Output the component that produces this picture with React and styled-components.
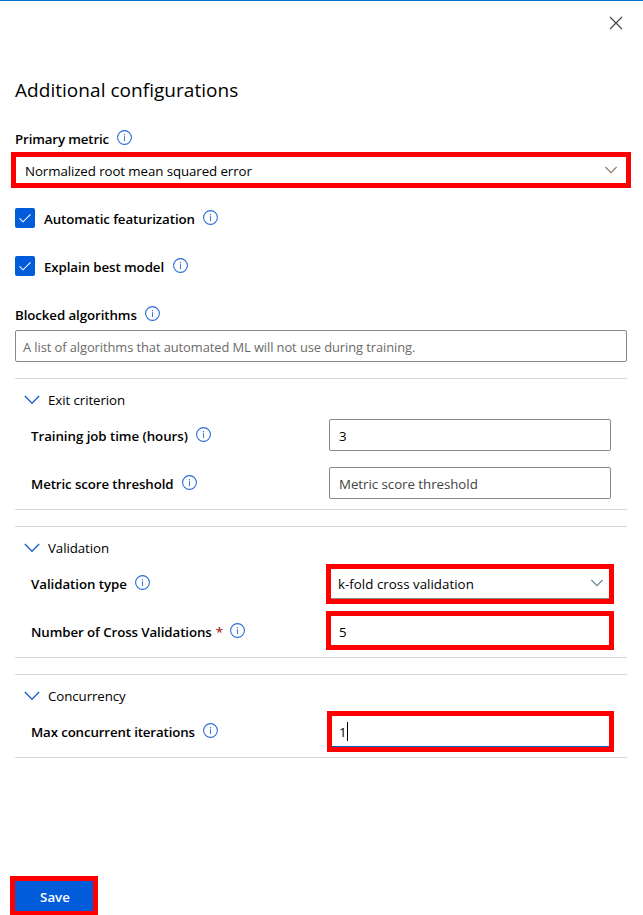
import React from "react";
import styled, { createGlobalStyle } from "styled-components";

const GlobalStyle = createGlobalStyle`
  * { box-sizing: border-box; }
  body {
    margin: 0;
    background: #fff;
    color: #000;
    font: 400 13.3px/20px "Open Sans", "Noto Sans", sans-serif;
  }
`;

const Panel = styled.main`
  width: 643px;
  height: 915px;
  overflow: hidden;
  display: flex;
  flex-direction: column;
  padding: 0 16px 0 15px;
  border-top: 1px solid #0072c9;
`;

const TopBar = styled.header`
  display: flex;
  justify-content: flex-end;
  height: 75px;
  padding-top: 15px;
`;

const CloseButton = styled.button`
  width: 14px;
  height: 14px;
  margin-right: 4px;
  padding: 0;
  border: 0;
  background: none;
  svg { display: block; }
`;

const Text = styled.span`
  flex: none;
  white-space: nowrap;
  letter-spacing: ${(p) => p.$track || 0}px;
  width: ${(p) => (p.$width ? `${p.$width}px` : "auto")};
`;

const Placeholder = styled(Text)`
  font-size: 12.9px;
`;

const Title = styled.h1`
  margin: 0;
  height: 53px;
  font-size: 19px;
  font-weight: 400;
  line-height: 28px;
`;

const LabelRow = styled.div`
  display: flex;
  align-items: center;
  gap: 8px;
  height: 20px;
  font-weight: 600;
  svg { flex: none; margin-top: -3px; }
`;

const CheckRow = styled.div`
  display: flex;
  gap: 9px;
  height: 20px;
  margin-top: ${(p) => p.$top}px;
  ${LabelRow} { padding-top: 2px; }
`;

const CheckBox = styled.span`
  width: 20px;
  height: 20px;
  border-radius: 2px;
  background: #015cda;
  svg { display: block; }
`;

const Field = styled.div`
  position: relative;
  display: flex;
  align-items: center;
  justify-content: space-between;
  width: ${(p) => p.$width || 612}px;
  height: 32px;
  padding: 2px ${(p) => p.$end || 9}px 0 ${(p) => p.$pad || 9}px;
  border: 1px solid #8a8886;
  border-bottom-color: ${(p) => (p.$focused ? "#015cda" : "#8a8886")};
  border-radius: 2px;
  color: ${(p) => p.$color || "#000"};
  svg { flex: none; margin-top: -3px; }
`;

const Highlight = styled.span`
  position: absolute;
  inset: ${(p) => p.$inset};
  border: 5px solid #f00;
`;

const Caret = styled.i`
  display: inline-block;
  width: 1px;
  height: 19px;
  background: #000;
  vertical-align: middle;
  margin-top: -3px;
`;

const PrimaryMetric = styled.div`
  display: grid;
  gap: 5px;
`;

const Blocked = styled(PrimaryMetric)`
  margin: 29px 0 16px;
`;

const Section = styled.section`
  width: 612px;
  margin-bottom: 16px;
  padding: 0 16px 10px;
  border: solid #d8d8d8;
  border-width: 1px 0;
`;

const SectionHeader = styled.div`
  display: flex;
  align-items: center;
  gap: 8px;
  height: 40px;
  margin-left: -7px;
  padding-top: 2px;
`;

const Rows = styled.div`
  display: grid;
  gap: 16px;
`;

const FormRow = styled.div`
  display: grid;
  grid-template-columns: 298px 282px;
  height: 32px;
  align-items: center;
  ${LabelRow} { padding-top: 1px; }
  ${LabelRow} svg { margin-top: -3px; }
`;

const Required = styled.span`
  color: #a4262c;
  margin-left: 4px;
`;

const Footer = styled.footer`
  display: flex;
  height: 34px;
  margin-top: auto;
`;

const SaveButton = styled.button`
  position: relative;
  width: 78px;
  height: 30px;
  padding: 2px 0 0 2px;
  border: 0;
  background: #015cda;
  color: #fff;
  font: 600 13.3px/20px "Open Sans", "Noto Sans", sans-serif;
`;

const InfoIcon = () => (
  <svg width="15" height="15" viewBox="0 0 15 15" fill="none">
    <circle cx="7.5" cy="7.5" r="6.9" stroke="#2b6bd8" strokeWidth="1.1" />
    <path d="M7.5 6.2v4.8" stroke="#3f78db" strokeWidth="1.1" />
    <path d="M7.5 4v1.3" stroke="#3f78db" strokeWidth="1.2" />
  </svg>
);

const Chevron = ({ color = "#77736f" }) => (
  <svg width="12" height="8" viewBox="0 0 12 8" fill="none">
    <path d="M.4 1 6 6.6 11.6 1" stroke={color} strokeWidth="1.1" />
  </svg>
);

const SectionChevron = () => (
  <svg width="16" height="10" viewBox="0 0 16 10" fill="none">
    <path d="M.8 1 8 8.2 15.2 1" stroke="#1f62cf" strokeWidth="1.4" />
  </svg>
);

const Label = ({ text, width, track = -0.09, required }) => (
  <LabelRow>
    <Text $width={width} $track={track}>
      {text}
      {required && <Required>*</Required>}
    </Text>
    <InfoIcon />
  </LabelRow>
);

const Check = ({ text, width, top }) => (
  <CheckRow $top={top}>
    <CheckBox>
      <svg width="20" height="20" viewBox="0 0 20 20" fill="none">
        <path d="M4.6 10.4 8 13.8 15.5 6.4" stroke="#fff" strokeWidth="1.1" />
      </svg>
    </CheckBox>
    <Label text={text} width={width} />
  </CheckRow>
);

const Group = ({ title, children }) => (
  <Section>
    <SectionHeader>
      <SectionChevron />
      <Text $track={-0.08}>{title}</Text>
    </SectionHeader>
    <Rows>{children}</Rows>
  </Section>
);

export default function App() {
  return (
    <>
      <GlobalStyle />
      <Panel>
        <TopBar>
          <CloseButton aria-label="Close">
            <svg width="14" height="14" viewBox="0 0 14 14" fill="none">
              <path d="m1 1 12 12M13 1 1 13" stroke="#484644" strokeWidth="1.15" />
            </svg>
          </CloseButton>
        </TopBar>
        <Title><Text $track={0.04}>Additional configurations</Text></Title>
        <PrimaryMetric>
          <Label text="Primary metric" width={94} track={-0.14} />
          <Field>
            <Text $track={-0.09}>Normalized root mean squared error</Text>
            <Chevron color="#8c7a66" />
            <Highlight $inset="-3px -5px" />
          </Field>
        </PrimaryMetric>
        <Check text="Automatic featurization" width={151} top={22} />
        <Check text="Explain best model" width={121} top={28} />
        <Blocked>
          <Label text="Blocked algorithms" width={122} />
          <Field $pad={7} $color="#6c6a68">
            <Placeholder $track={-0.08}>
              A list of algorithms that automated ML will not use during training.
            </Placeholder>
          </Field>
        </Blocked>
        <Group title="Exit criterion">
          <FormRow>
            <Label text="Training job time (hours)" width={157} track={-0.05} />
            <Field $width={282}><Text>3</Text></Field>
          </FormRow>
          <FormRow>
            <Label text="Metric score threshold" width={142.5} track={-0.11} />
            <Field $width={282} $color="#444"><Text $track={-0.04}>Metric score threshold</Text></Field>
          </FormRow>
        </Group>
        <Group title="Validation">
          <FormRow>
            <Label text="Validation type" width={95.5} track={-0.06} />
            <Field $width={282} $pad={8} $end={7}>
              <Text $track={0.03}>k-fold cross validation</Text>
              <Chevron color="#64849a" />
              <Highlight $inset="-4px -4px -6px" />
            </Field>
          </FormRow>
          <FormRow>
            <Label text="Number of Cross Validations" width={191} required />
            <Field $width={282}>
              <Text>5</Text>
              <Highlight $inset="-5px -4px -4px" />
            </Field>
          </FormRow>
        </Group>
        <Group title="Concurrency">
          <FormRow>
            <Label text="Max concurrent iterations" width={164} track={-0.14} />
            <Field $width={282} $focused>
              <Text>1<Caret /></Text>
              <Highlight $inset="-5px -4px -6px -3px" />
            </Field>
          </FormRow>
        </Group>
        <Footer>
          <SaveButton>Save<Highlight $inset="-5px" /></SaveButton>
        </Footer>
      </Panel>
    </>
  );
}
